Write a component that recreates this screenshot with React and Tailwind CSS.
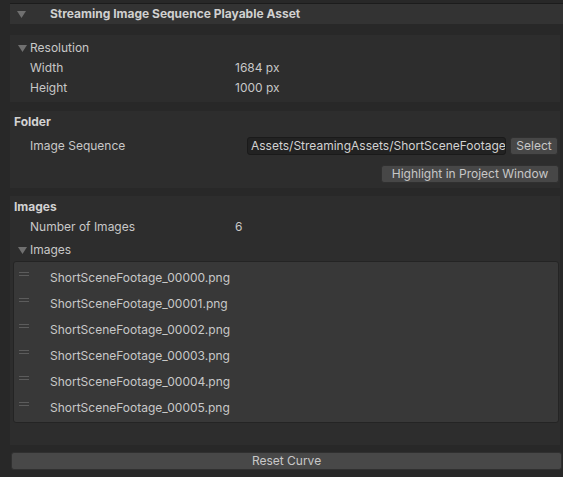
import React from "react";

const Tri = () => (
  <svg width="9" height="8" viewBox="0 0 9 8" className="shrink-0">
    <polygon points="0,1 9,1 4.5,8" fill="#707070" />
  </svg>
);

const Row = ({ label, value }) => (
  <div className="flex items-center h-[20px] pl-[20px]">
    <span className="w-[205px]">{label}</span>
    <span>{value}</span>
  </div>
);

const Handle = () => (
  <div className="flex flex-col gap-[2px] w-[10px] mt-[-9px] ml-[5px] mr-[21px]">
    <div className="h-px bg-[#5c5c5c]" />
    <div className="h-px bg-[#5c5c5c]" />
  </div>
);

const files = [
  "ShortSceneFootage_00000.png",
  "ShortSceneFootage_00001.png",
  "ShortSceneFootage_00002.png",
  "ShortSceneFootage_00003.png",
  "ShortSceneFootage_00004.png",
  "ShortSceneFootage_00005.png",
];

export default function App() {
  return (
    <div
      className="w-[563px] h-[477px] bg-[#282828] text-[#c8c8c8] text-[12px] overflow-hidden flex flex-col"
      style={{ fontFamily: "Inter, 'Noto Sans', sans-serif" }}
    >
      {/* Header */}
      <div className="h-[3px]" />
      <div className="h-px bg-[#1c1c1c] ml-[10px]" />
      <div className="h-[20px] ml-[10px] bg-[#333333] flex items-center">
        <div className="w-[40px] pl-[7px] flex">
          <Tri />
        </div>
        <span className="font-bold text-[#d0d0d0]">
          Streaming Image Sequence Playable Asset
        </span>
      </div>

      {/* Resolution */}
      <div className="mt-[11px] ml-[10px] mr-[3px] bg-[#2d2d2d] h-[67px] pt-[3px]">
        <div className="flex items-center h-[20px] pl-[8px] gap-[3px]">
          <Tri />
          <span>Resolution</span>
        </div>
        <Row label="Width" value="1684 px" />
        <Row label="Height" value="1000 px" />
      </div>

      {/* Folder */}
      <div className="mt-[9px] ml-[10px] mr-[3px] bg-[#2d2d2d] h-[77px] pt-[1px]">
        <div className="flex items-center h-[20px] pl-[4px] font-bold text-[#d2d2d2]">
          Folder
        </div>
        <div className="flex items-center h-[22px] mt-[3px] pl-[20px]">
          <span className="w-[217px]">Image Sequence</span>
          <div className="w-[259px] h-[18px] bg-[#222222] border border-[#1a1a1a] rounded-[3px] flex items-center pl-[3px] text-[#d2d2d2] whitespace-nowrap overflow-hidden">
            Assets/StreamingAssets/ShortSceneFootage
          </div>
          <div className="ml-[4px] w-[48px] h-[18px] bg-[#474747] border border-[#303030] rounded-[3px] flex items-center justify-center">
            Select
          </div>
        </div>
        <div className="flex justify-end mt-[8px] pr-[1px]">
          <div className="w-[178px] h-[18px] bg-[#474747] border border-[#303030] rounded-[3px] flex items-center justify-center">
            Highlight in Project Window
          </div>
        </div>
      </div>

      {/* Images */}
      <div className="mt-[8px] ml-[10px] mr-[3px] bg-[#2d2d2d] h-[249px] pt-[1px]">
        <div className="flex items-center h-[20px] pl-[4px] font-bold text-[#d2d2d2]">
          Images
        </div>
        <Row label="Number of Images" value="6" />
        <div className="flex items-center h-[20px] pl-[8px] gap-[3px] mt-[3px]">
          <Tri />
          <span>Images</span>
        </div>
        <div className="ml-[3px] mr-[1px] mt-px h-[162px] bg-[#383838] border border-[#242424] rounded-[3px] pt-[3px]">
          {files.map((f) => (
            <div key={f} className="flex items-center h-[26px]">
              <Handle />
              <span>{f}</span>
            </div>
          ))}
        </div>
      </div>

      {/* Reset Curve */}
      <div className="mt-[7px] ml-[11px] mr-px h-[18px] bg-[#484848] border border-[#303030] rounded-[3px] flex items-center justify-center">
        Reset Curve
      </div>
    </div>
  );
}
